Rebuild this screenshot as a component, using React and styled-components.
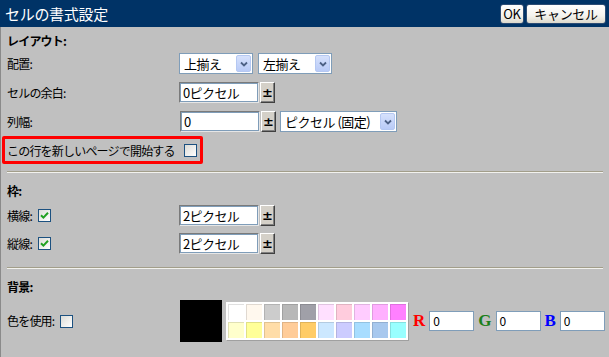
import React from "react";
import styled, { createGlobalStyle } from "styled-components";

const Global = createGlobalStyle`
  html, body { margin: 0; padding: 0; background: #c0c0c0; }
  body { font-family: "Noto Sans CJK JP", "Noto Sans", sans-serif; }
  * { box-sizing: border-box; }
`;

const Dialog = styled.div`
  width: 609px;
  height: 357px;
  display: flex;
  flex-direction: column;
  background: #c0c0c0;
  overflow: hidden;
`;

const TitleBar = styled.div`
  height: 27px;
  flex: none;
  background: #003366;
  display: flex;
  align-items: center;
  justify-content: space-between;
  padding: 0 3px 0 5px;
`;

const Title = styled.div`
  color: #fff;
  font-size: 15px;
  letter-spacing: -0.3px;
  line-height: 20px;
`;

const ButtonGroup = styled.div`
  display: flex;
  gap: 2px;
  align-items: center;
`;

const DialogButton = styled.button`
  width: ${(p) => p.$w}px;
  height: 20px;
  padding: 0;
  border: 1px solid #2c4c74;
  border-radius: 3px;
  background: linear-gradient(#ffffff, #f4f3ee 60%, #dcd9cc);
  font-family: "Noto Sans CJK JP", sans-serif;
  font-size: 13px;
  line-height: 18px;
  color: #000;
  letter-spacing: -0.3px;
`;

const Body = styled.div`
  flex: 1;
  border-left: 1px solid #8a8a8a;
  padding: 0 6px 0 6px;
  font-size: 12px;
  letter-spacing: -0.8px;
  color: #000;
`;

const Section = styled.div`
  padding-top: ${(p) => p.$top}px;
  display: flex;
  flex-direction: column;
`;

const SectionTitle = styled.div`
  font-weight: bold;
  line-height: 20px;
  height: 20px;
`;

const Row = styled.div`
  display: grid;
  grid-template-columns: 172px auto;
  align-items: center;
  height: ${(p) => p.$h || 21}px;
  margin-top: ${(p) => p.$mt}px;
`;

const Label = styled.div`
  display: flex;
  align-items: center;
  gap: 6px;
  line-height: 16px;
`;

const Controls = styled.div`
  display: flex;
  align-items: center;
  gap: ${(p) => p.$gap ?? 5}px;
  margin-left: ${(p) => p.$ml || 0}px;
`;

const SelectBox = styled.div`
  width: ${(p) => p.$w}px;
  height: 21px;
  border: 1px solid #7f9db9;
  background: #fff;
  display: flex;
  align-items: center;
  justify-content: space-between;
  padding: 0 1px 0 4px;
  font-size: 13px;
  letter-spacing: -0.5px;
`;

const ArrowBtn = styled.div`
  width: 15px;
  height: 17px;
  border: 1px solid #b5c8f2;
  border-radius: 2px;
  background: linear-gradient(#d6e1fc, #b9cbf7);
  display: flex;
  align-items: center;
  justify-content: center;
`;

const FieldFrame = styled.div`
  width: ${(p) => p.$w}px;
  height: 21px;
  border: 1px solid;
  border-color: #7a7a7a #e6e6e6 #e6e6e6 #7a7a7a;
  display: flex;
`;

const FieldInner = styled.div`
  flex: 1;
  border: 1px solid #7f9db9;
  background: #fff;
  padding-left: 2px;
  font-size: 13px;
  line-height: 17px;
  letter-spacing: -0.6px;
  white-space: nowrap;
`;

const Spin = styled.div`
  width: 15px;
  height: 21px;
  background: #d4d0c8;
  border: 1px solid;
  border-color: #ffffff #404040 #404040 #ffffff;
  box-shadow: inset -1px -1px 0 #808080;
  display: flex;
  align-items: center;
  justify-content: center;
  font-family: "DejaVu Sans", sans-serif;
  font-weight: bold;
  font-size: 13px;
  line-height: 17px;
  letter-spacing: 0;
`;

const FieldWithSpin = styled.div`
  display: flex;
  align-items: center;
  gap: 1px;
`;

const RedBox = styled.div`
  margin: 4px 0 0 -5px;
  width: 201px;
  height: 28px;
  border: 3px solid #ff0000;
  border-radius: 2px;
  display: flex;
  align-items: center;
  padding-left: 2px;
`;

const CheckWrap = styled.span`
  display: inline-flex;
  width: 13px;
  height: 13px;
  border: 1px solid #1c5180;
  background: linear-gradient(135deg, #dcdcd7, #ffffff);
  align-items: center;
  justify-content: center;
  margin-left: ${(p) => p.$ml || 0}px;
  flex: none;
`;

const Separator = styled.div`
  margin-top: ${(p) => p.$mt}px;
  height: 2px;
  border-top: 1px solid #a29e8a;
  border-bottom: 1px solid #f2f2ee;
`;

const Swatch = styled.div`
  width: 42px;
  height: 42px;
  background: #000;
`;

const Palette = styled.div`
  display: grid;
  grid-template-columns: repeat(10, 16px);
  grid-auto-rows: 16px;
  gap: 2px;
  padding: 2px;
  margin-left: 4px;
  background: #fff;
  box-shadow: 1px 1px 0 #a0a0a0;
`;

const Cell = styled.div`
  background: ${(p) => p.$c};
  box-shadow: inset 1px 1px 0 rgba(0, 0, 0, 0.12);
`;

const RGBLabel = styled.span`
  font-family: "Liberation Serif", serif;
  font-weight: bold;
  font-size: 17px;
  letter-spacing: 0;
  color: ${(p) => p.$c};
  margin: 0 4px 0 ${(p) => p.$ml}px;
`;

const RGBInput = styled.div`
  width: 45px;
  height: 20px;
  border: 1px solid #7f9db9;
  background: #fff;
  padding-left: 3px;
  font-size: 12px;
  line-height: 18px;
`;

const Check = ({ checked, ml }) => (
  <CheckWrap $ml={ml}>
    {checked && (
      <svg width="9" height="9" viewBox="0 0 9 9">
        <path d="M1 4.2 L3.4 6.6 L8 1.8" stroke="#21a121" strokeWidth="2" fill="none" />
      </svg>
    )}
  </CheckWrap>
);

const Select = ({ w, children }) => (
  <SelectBox $w={w}>
    <span>{children}</span>
    <ArrowBtn>
      <svg width="8" height="6" viewBox="0 0 8 6">
        <path d="M1 1.5 L4 4.5 L7 1.5" stroke="#4d6185" strokeWidth="1.8" fill="none" />
      </svg>
    </ArrowBtn>
  </SelectBox>
);

const Field = ({ w = 80, children }) => (
  <FieldWithSpin>
    <FieldFrame $w={w}>
      <FieldInner>{children}</FieldInner>
    </FieldFrame>
    <Spin>±</Spin>
  </FieldWithSpin>
);

const palette = [
  "#ffffff", "#fff8ee", "#cccccc", "#b8b8b8", "#a0a0a8",
  "#ffe0ff", "#ffccdd", "#ffccff", "#ffb0ff", "#ff80ff",
  "#ffffcc", "#ffff99", "#ffdda8", "#ffcc99", "#ffcc66",
  "#cce8ff", "#ccccff", "#a8ddff", "#a8c8ee", "#99ffff",
];

export default function App() {
  return (
    <Dialog>
      <Global />
      <TitleBar>
        <Title>セルの書式設定</Title>
        <ButtonGroup>
          <DialogButton $w={24}>OK</DialogButton>
          <DialogButton $w={80}>キャンセル</DialogButton>
        </ButtonGroup>
      </TitleBar>
      <Body>
        <Section $top={4}>
          <SectionTitle>レイアウト:</SectionTitle>
          <Row $mt={2}>
            <Label>配置:</Label>
            <Controls>
              <Select w={74}>上揃え</Select>
              <Select w={74}>左揃え</Select>
            </Controls>
          </Row>
          <Row $mt={8}>
            <Label>セルの余白:</Label>
            <Controls>
              <Field>0ピクセル</Field>
            </Controls>
          </Row>
          <Row $mt={8}>
            <Label>列幅:</Label>
            <Controls $ml={1} $gap={4}>
              <Field>0</Field>
              <Select w={117}>ピクセル (固定)</Select>
            </Controls>
          </Row>
          <RedBox>
            この行を新しいページで開始する
            <Check ml={9} />
          </RedBox>
        </Section>
        <Separator $mt={7} />
        <Section $top={8}>
          <SectionTitle>枠:</SectionTitle>
          <Row $mt={4}>
            <Label>
              横線:
              <Check checked />
            </Label>
            <Controls>
              <Field>2ピクセル</Field>
            </Controls>
          </Row>
          <Row $mt={7}>
            <Label>
              縦線:
              <Check checked />
            </Label>
            <Controls>
              <Field>2ピクセル</Field>
            </Controls>
          </Row>
        </Section>
        <Separator $mt={13} />
        <Section $top={8}>
          <SectionTitle>背景:</SectionTitle>
          <Row $mt={3} $h={42}>
            <Label>
              色を使用:
              <Check />
            </Label>
            <Controls $ml={1} $gap={0}>
              <Swatch />
              <Palette>
                {palette.map((c, i) => (
                  <Cell key={i} $c={c} />
                ))}
              </Palette>
              <RGBLabel $c="#ff0000" $ml={5}>R</RGBLabel>
              <RGBInput>0</RGBInput>
              <RGBLabel $c="#1a7f1a" $ml={4}>G</RGBLabel>
              <RGBInput>0</RGBInput>
              <RGBLabel $c="#0000ff" $ml={4}>B</RGBLabel>
              <RGBInput>0</RGBInput>
            </Controls>
          </Row>
        </Section>
      </Body>
    </Dialog>
  );
}
